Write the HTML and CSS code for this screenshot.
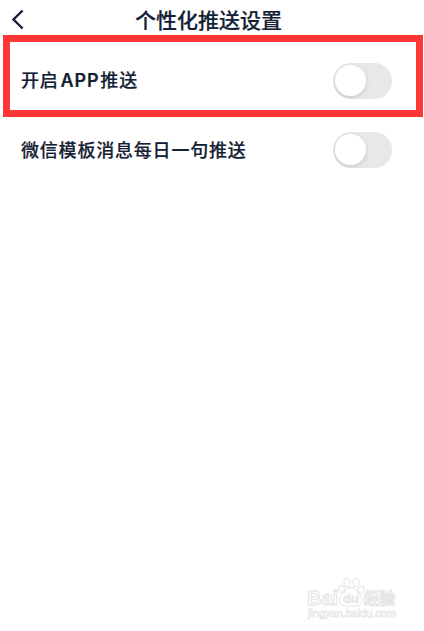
FILE: index.html
```html
<!doctype html>
<html lang="zh-CN">
<head>
  <meta charset="UTF-8">
  <title>个性化推送设置</title>
  <meta name="viewport" content="width=device-width, initial-scale=1.0">
  <link rel="stylesheet" href="styles.css">
</head>
<body>
  <header class="navbar">
    <svg class="back" width="14" height="22" viewBox="0 0 14 22">
      <path d="M12.600 1.500 L3.500 10.500 L12.600 19.500"/>
    </svg>
    <h1>个性化推送设置</h1>
  </header>

  <main class="settings">
    <div class="row highlight">
      <span class="label">开启<span class="latin">APP</span>推送</span>
      <span class="switch" role="switch" aria-checked="false"></span>
    </div>
    <div class="row">
      <span class="label">微信模板消息每日一句推送</span>
      <span class="switch" role="switch" aria-checked="false"></span>
    </div>
  </main>

  <footer class="watermark">
    <svg width="94" height="48" viewBox="0 0 94 48">
      <text class="brand" x="1" y="28" textLength="31" lengthAdjust="spacingAndGlyphs">Bai</text>
      <g class="paw">
        <ellipse cx="35.500" cy="12" rx="3" ry="3.800"/>
        <ellipse cx="41" cy="5.500" rx="3" ry="4.300"/>
        <ellipse cx="50" cy="5.500" rx="3" ry="4.300"/>
        <ellipse cx="55" cy="13" rx="3" ry="3.800"/>
        <path d="M45 10.500c5 0 5.500 4 8 7c3 3 4 5 3 8c-1.500 4-5 3.500-11 3.500s-10 .5-11.500-3.500c-1-3 0-5 3-8c2.500-3 3.500-7 8.500-7z"/>
      </g>
      <text class="du" x="37" y="26">du</text>
      <text class="brand-cn" x="58" y="27">经验</text>
      <text class="site" x="2" y="40" textLength="88" lengthAdjust="spacingAndGlyphs">jingyan.baidu.com</text>
    </svg>
  </footer>
</body>
</html>
```

FILE: styles.css
```css
:root {
  --text: #151f35;
  --mark: #ff3636;
  --track: #e8e8e8;
  --wm: #e2e2e2;
}

* {
  box-sizing: border-box;
}

body {
  margin: 0;
  height: 631px;
  display: flex;
  flex-direction: column;
  overflow: hidden;
  background: #fff;
  color: var(--text);
  font-family: "Noto Sans CJK SC", sans-serif;
  font-weight: 500;
}

.navbar {
  display: flex;
  align-items: center;
  height: 35px;
  padding: 4px 0 0 10px;
}

.back {
  fill: none;
  stroke: var(--text);
  stroke-width: 2.4;
}

h1 {
  margin: -2px 0 0 111px;
  font-size: 21px;
  line-height: 30px;
  font-weight: 500;
  -webkit-text-stroke: 0.2px var(--text);
}

.row {
  display: flex;
  align-items: center;
  justify-content: space-between;
  margin: 0 1px 0 3px;
  height: 66px;
  padding: 0 31px 0 18px;
}

.row.highlight {
  height: 82px;
  border: 7px solid var(--mark);
  padding: 9px 24px 0 11px;
}

.row.highlight .label {
  margin-top: -4px;
}

.label {
  margin-top: -2px;
  font-size: 18px;
  letter-spacing: 0.8px;
  white-space: nowrap;
  -webkit-text-stroke: 0.2px var(--text);
}

.latin {
  font-family: Inter, sans-serif;
  font-weight: 600;
  margin: 0 1px 0 2px;
  letter-spacing: 0.8px;
}

.switch {
  width: 59px;
  height: 36px;
  padding: 2px;
  border-radius: 18px;
  background: var(--track);
  overflow: hidden;
}

.switch::before {
  content: "";
  display: block;
  width: 31px;
  height: 31px;
  border-radius: 50%;
  background: #fff;
  box-shadow: 0 2px 5px rgba(0, 0, 0, 0.13);
}

.watermark {
  margin: auto 24px 6px auto;
  height: 48px;
}

.watermark text,
.paw {
  fill: #fff;
  stroke: var(--wm);
  stroke-width: 1;
}

.brand {
  font: bold 20px "Liberation Sans", sans-serif;
}

.watermark .du {
  font: bold 13px "Liberation Sans", sans-serif;
  fill: #eee;
  stroke-width: 0.6;
}

.brand-cn {
  font: bold 15.5px "Noto Sans CJK SC", sans-serif;
}

.watermark .site {
  font: 11px "Liberation Sans", sans-serif;
  stroke: #e8e8e8;
  stroke-width: 0.8;
}
```
